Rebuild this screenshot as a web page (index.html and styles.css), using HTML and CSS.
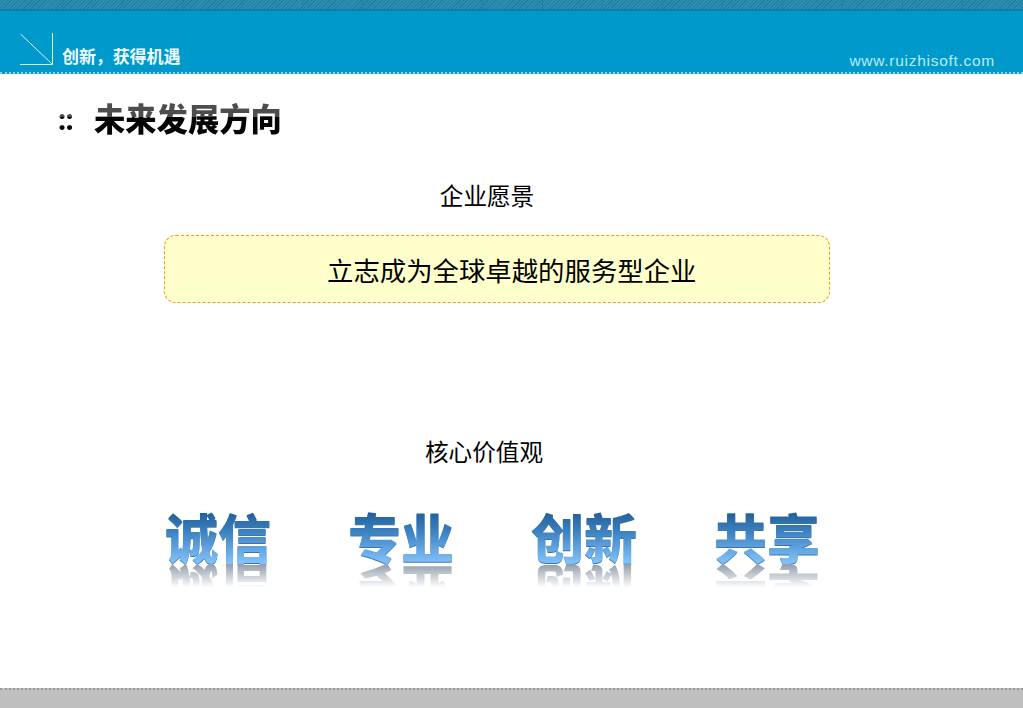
FILE: index.html
```html
<!DOCTYPE html>
<html lang="zh-CN">
<head>
<meta charset="utf-8">
<title>未来发展方向</title>
<link rel="stylesheet" href="styles.css">
</head>
<body>
<div class="slide">
  <header class="banner">
    <div class="hatch">
      <i></i><i></i><i></i><i></i><i></i><i></i><i></i><i></i><i></i><i></i><i></i><i></i><i></i><i></i><i></i><i></i><i></i>
    </div>
    <div class="band">
      <div class="brand">
        <svg class="logo" width="34" height="32" viewBox="0 0 34 32" aria-hidden="true">
          <path d="M0.5 1 L32 31 M32.5 0 V31.5 H0" fill="none" stroke="#d8f3fb" stroke-width="1"/>
        </svg>
        <span class="slogan">创新，获得机遇</span>
      </div>
      <span class="url">www.ruizhisoft.com</span>
    </div>
  </header>
  <main class="content">
    <h1 class="title"><span class="bullet">::</span><span>未来发展方向</span></h1>
    <section class="vision">
      <h2 class="label label-vision">企业愿景</h2>
      <div class="callout">立志成为全球卓越的服务型企业</div>
    </section>
    <section class="values">
      <h2 class="label label-values">核心价值观</h2>
      <div class="words">
        <div class="word"><span class="face">诚信</span><span class="mirror" aria-hidden="true">诚信</span></div>
        <div class="word"><span class="face">专业</span><span class="mirror" aria-hidden="true">专业</span></div>
        <div class="word"><span class="face">创新</span><span class="mirror" aria-hidden="true">创新</span></div>
        <div class="word"><span class="face">共享</span><span class="mirror" aria-hidden="true">共享</span></div>
      </div>
    </section>
  </main>
  <footer class="foot"></footer>
</div>
</body>
</html>
```
FILE: styles.css
```css
* { box-sizing: border-box; }
html, body { margin: 0; padding: 0; background: #fff; }
body {
  width: 1023px;
  height: 708px;
  overflow: hidden;
  font-family: "Noto Sans CJK SC", "Liberation Sans", sans-serif;
  color: #000;
}
.slide { width: 1023px; height: 708px; display: flex; flex-direction: column; }

.banner { flex: none; height: 74px; display: flex; flex-direction: column; }
.hatch {
  flex: none;
  height: 11px;
  display: flex;
  justify-content: space-between;
  padding: 0 0 0 62px;
  background: repeating-linear-gradient(135deg, #1f7fa3 0 1px, #2f8fb2 1px 2.5px);
  border-bottom: 2px solid #0b7fa9;
}
.hatch i { display: block; width: 1px; height: 100%; background: #2a7b9b; }
.hatch i:last-child { background: transparent; }
.band {
  flex: 1;
  background: #0099cb;
  border-bottom: 2px dotted #8fd3ea;
  display: flex;
  justify-content: space-between;
  align-items: flex-end;
  padding: 0 28px 0 20px;
}
.brand { display: flex; align-items: flex-end; gap: 8px; padding-bottom: 6px; }
.logo { display: block; flex: none; margin-bottom: 1px; }
.slogan {
  font-size: 17px;
  line-height: 21px;
  font-weight: 700;
  color: #eefbff;
  letter-spacing: -0.1px;
}
.url {
  font-family: "Liberation Sans", sans-serif;
  font-size: 15.5px;
  line-height: 18px;
  color: #b7ecf9;
  letter-spacing: 0.72px;
  padding-bottom: 2px;
}

.content { flex: 1; display: flex; flex-direction: column; }
.title {
  margin: 21px 0 0 58px;
  width: 240px;
  display: flex;
  align-items: center;
  gap: 19px;
  font-size: 31.3px;
  line-height: 46px;
  font-weight: 900;
  background: linear-gradient(180deg, #4d4d4d 0 48%, #050505 48% 100%);
  -webkit-background-clip: text;
  background-clip: text;
  color: transparent;
}
.bullet {
  width: 17px;
  font-family: "Lato", sans-serif;
  font-size: 31px;
  line-height: 46px;
  font-weight: 900;
  letter-spacing: -0.5px;
}
.label {
  margin: 0;
  font-size: 23.6px;
  line-height: 34px;
  font-weight: 400;
  text-align: center;
}
.label-vision { width: 974px; margin-top: 37px; }
.label-values { width: 968px; }
.callout {
  width: 666px;
  height: 68px;
  margin: 23px 0 0 164px;
  padding: 1px 0 0 162px;
  display: flex;
  align-items: center;
  border: 1px dashed #ec9a2a;
  border-radius: 12px;
  background: #ffffcc;
  box-shadow: 0 0 1px rgba(240, 170, 80, .6);
  font-size: 26.4px;
  white-space: nowrap;
}
.values { margin-top: 131px; }
.words {
  display: flex;
  gap: 78px;
  margin: 40px 0 0 165px;
}
.word { width: 105px; display: flex; flex-direction: column; }
.face, .mirror {
  display: block;
  height: 56px;
  font-size: 53px;
  line-height: 56px;
  font-weight: 900;
  white-space: nowrap;
  -webkit-background-clip: text;
  background-clip: text;
  color: transparent;
}
.face {
  background-image: linear-gradient(180deg, #1f5d98 6%, #3f84c4 45%, #80c0f8 96%);
  filter: drop-shadow(0 1px 0 #3d74a6);
}
.mirror {
  transform: scaleY(-1);
  background-image: linear-gradient(180deg, rgba(140,150,162,0) 58%, #97a2ae 98%);
}

.foot {
  flex: none;
  height: 20px;
  background: #bfbfbf;
  border-top: 2px dotted #999;
}
```
